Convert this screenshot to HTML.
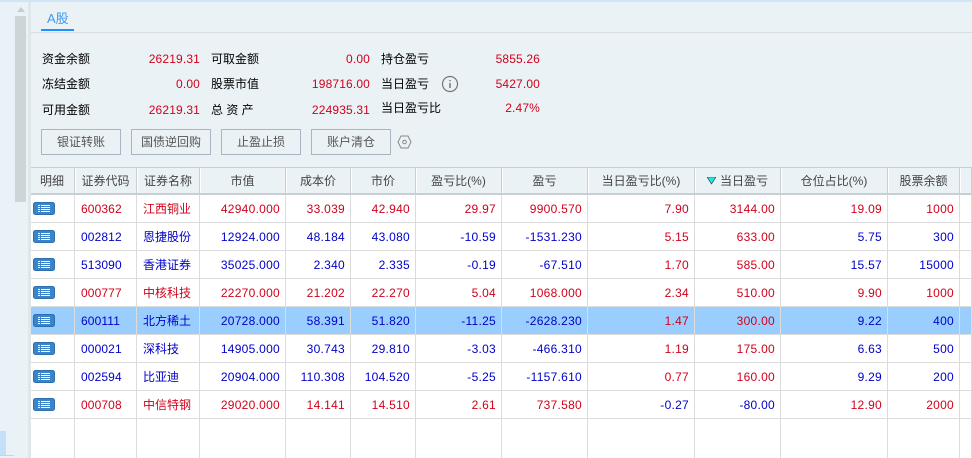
<!DOCTYPE html>
<html><head><meta charset="utf-8">
<style>
html,body{margin:0;padding:0;width:972px;height:458px;overflow:hidden}
body{position:relative;background:#fff;font:12px/16px "Liberation Sans","Noto Sans CJK SC",sans-serif;color:#222}
.a{position:absolute;white-space:nowrap}
.l{color:#000;font-size:12px}
.v{color:#d0021b;text-align:right;width:80px;letter-spacing:.15px}
.btn{position:absolute;top:129px;height:24px;width:78px;border:1px solid #a9b5c3;text-align:center;line-height:24px;color:#555;font-size:12px}
.clip{position:absolute;left:30px;top:167px;width:942px;height:291px;overflow:hidden}
table{position:absolute;left:0;top:0;border-collapse:separate;border-spacing:0;table-layout:fixed;width:942px}
th{height:25px;padding:0;background:#ebf2f6;font-weight:normal;color:#444;border-top:1px solid #c9ced2;border-bottom:2px solid #c9ced2;border-right:1px solid #c9ced2;text-align:center;font-size:12px;box-shadow:inset 1px 0 #fff}
td{height:27px;padding:0 5px 0 0;border-bottom:1px solid #dcdcdc;border-right:1px solid #dcdcdc;text-align:right;font-size:12px;letter-spacing:.27px;overflow:hidden;white-space:nowrap}
td.c{text-align:left;padding-left:6px;padding-right:0;letter-spacing:.12px}
td.n{letter-spacing:0}
tr.r td{color:#d0021b}
tr.b td{color:#0000c8}
tr.s td{background:#99ceff}
tr.f td{height:60px}
.ic{display:block;width:22px;height:13px;margin-left:3px}
td.i{padding:0;text-align:left}
</style></head><body>
<div class="a" style="left:0;top:0;width:972px;height:2px;background:#cfe6f8"></div>
<div class="a" style="left:0;top:2px;width:28px;height:456px;background:#e9f2f6"></div>
<div class="a" style="left:15px;top:16px;width:11px;height:186px;background:#cdd5d7"></div>
<svg class="a" style="left:17px;top:7px" width="8" height="5"><path d="M0 5L4 0L8 5Z" fill="#c4cdd0"/></svg>
<div class="a" style="left:0;top:431px;width:6px;height:24px;background:#c3e0f8"></div>
<div class="a" style="left:0;top:455px;width:14px;height:1px;background:#c5d5e2"></div>

<div class="a" style="left:31px;top:2px;width:941px;height:165px;background:#ebf2f6"></div>
<div class="a" style="left:31px;top:32px;width:941px;height:1px;background:#d8dde1"></div>
<div class="a" style="left:41px;top:29px;width:33px;height:2px;background:#1e90ff"></div>
<div class="a" style="left:47px;top:11px;color:#3a9bf0;font-size:13px">A股</div>

<div class="a l" style="left:42px;top:51px">资金余额</div>
<div class="a l" style="left:42px;top:76px">冻结金额</div>
<div class="a l" style="left:42px;top:102px">可用金额</div>
<div class="a v" style="left:120px;top:51px">26219.31</div>
<div class="a v" style="left:120px;top:76px">0.00</div>
<div class="a v" style="left:120px;top:102px">26219.31</div>

<div class="a l" style="left:211px;top:51px">可取金额</div>
<div class="a l" style="left:211px;top:76px">股票市值</div>
<div class="a l" style="left:211px;top:102px">总 资 产</div>
<div class="a v" style="left:290px;top:51px">0.00</div>
<div class="a v" style="left:290px;top:76px">198716.00</div>
<div class="a v" style="left:290px;top:102px">224935.31</div>

<div class="a l" style="left:381px;top:51px">持仓盈亏</div>
<div class="a l" style="left:381px;top:76px">当日盈亏</div>
<div class="a l" style="left:381px;top:100px">当日盈亏比</div>
<div class="a v" style="left:460px;top:51px">5855.26</div>
<div class="a v" style="left:460px;top:76px">5427.00</div>
<div class="a v" style="left:460px;top:100px">2.47%</div>
<svg class="a" style="left:441px;top:75px" width="18" height="18"><circle cx="9" cy="9" r="7.5" fill="none" stroke="#777" stroke-width="1.2"/><path d="M9 8V13M9 5V6.4" stroke="#666" stroke-width="1.3"/></svg>

<div class="btn" style="left:41px">银证转账</div>
<div class="btn" style="left:131px">国债逆回购</div>
<div class="btn" style="left:221px">止盈止损</div>
<div class="btn" style="left:311px">账户清仓</div>
<svg class="a" style="left:397px;top:135px" width="15" height="14"><path d="M4 1H11L14 7L11 13H4L1 7Z" fill="none" stroke="#888" stroke-width="1"/><circle cx="7.5" cy="7" r="1.8" fill="none" stroke="#888"/></svg>

<div class="clip">
<table>
<colgroup><col style="width:45px"><col style="width:62px"><col style="width:63px"><col style="width:86px"><col style="width:65px"><col style="width:65px"><col style="width:86px"><col style="width:86px"><col style="width:107px"><col style="width:86px"><col style="width:107px"><col style="width:72px"><col></colgroup>
<tr><th>明细</th><th>证券代码</th><th>证券名称</th><th>市值</th><th>成本价</th><th>市价</th><th>盈亏比(%)</th><th>盈亏</th><th>当日盈亏比(%)</th><th><svg width="9" height="8" style="margin-right:4px"><path d="M0 0H9L4.5 7Z" fill="#1de9e0" stroke="#223" stroke-width=".6"/></svg>当日盈亏</th><th>仓位占比(%)</th><th>股票余额</th><th></th></tr>
<tr class="r"><td class="i"><svg class="ic" viewBox="0 0 22 13"><rect x=".5" y=".5" width="21" height="12" rx="2" fill="#3a84c9" stroke="#2f6fae"/><path d="M5 3.5H7M8 3.5H17M5 5.5H7M8 5.5H17M5 7.5H7M8 7.5H17M5 9.5H7M8 9.5H17" stroke="#fff" stroke-width="1"/></svg></td><td class="c">600362</td><td class="c n">江西铜业</td><td>42940.000</td><td>33.039</td><td>42.940</td><td>29.97</td><td>9900.570</td><td>7.90</td><td>3144.00</td><td>19.09</td><td>1000</td><td></td></tr>
<tr class="b"><td class="i"><svg class="ic" viewBox="0 0 22 13"><rect x=".5" y=".5" width="21" height="12" rx="2" fill="#3a84c9" stroke="#2f6fae"/><path d="M5 3.5H7M8 3.5H17M5 5.5H7M8 5.5H17M5 7.5H7M8 7.5H17M5 9.5H7M8 9.5H17" stroke="#fff" stroke-width="1"/></svg></td><td class="c">002812</td><td class="c n">恩捷股份</td><td>12924.000</td><td>48.184</td><td>43.080</td><td>-10.59</td><td>-1531.230</td><td style="color:#d0021b">5.15</td><td style="color:#d0021b">633.00</td><td>5.75</td><td>300</td><td></td></tr>
<tr class="b"><td class="i"><svg class="ic" viewBox="0 0 22 13"><rect x=".5" y=".5" width="21" height="12" rx="2" fill="#3a84c9" stroke="#2f6fae"/><path d="M5 3.5H7M8 3.5H17M5 5.5H7M8 5.5H17M5 7.5H7M8 7.5H17M5 9.5H7M8 9.5H17" stroke="#fff" stroke-width="1"/></svg></td><td class="c">513090</td><td class="c n">香港证券</td><td>35025.000</td><td>2.340</td><td>2.335</td><td>-0.19</td><td>-67.510</td><td style="color:#d0021b">1.70</td><td style="color:#d0021b">585.00</td><td>15.57</td><td>15000</td><td></td></tr>
<tr class="r"><td class="i"><svg class="ic" viewBox="0 0 22 13"><rect x=".5" y=".5" width="21" height="12" rx="2" fill="#3a84c9" stroke="#2f6fae"/><path d="M5 3.5H7M8 3.5H17M5 5.5H7M8 5.5H17M5 7.5H7M8 7.5H17M5 9.5H7M8 9.5H17" stroke="#fff" stroke-width="1"/></svg></td><td class="c">000777</td><td class="c n">中核科技</td><td>22270.000</td><td>21.202</td><td>22.270</td><td>5.04</td><td>1068.000</td><td>2.34</td><td>510.00</td><td>9.90</td><td>1000</td><td></td></tr>
<tr class="b s"><td class="i"><svg class="ic" viewBox="0 0 22 13"><rect x=".5" y=".5" width="21" height="12" rx="2" fill="#3a84c9" stroke="#2f6fae"/><path d="M5 3.5H7M8 3.5H17M5 5.5H7M8 5.5H17M5 7.5H7M8 7.5H17M5 9.5H7M8 9.5H17" stroke="#fff" stroke-width="1"/></svg></td><td class="c">600111</td><td class="c n">北方稀土</td><td>20728.000</td><td>58.391</td><td>51.820</td><td>-11.25</td><td>-2628.230</td><td style="color:#d0021b">1.47</td><td style="color:#d0021b">300.00</td><td>9.22</td><td>400</td><td></td></tr>
<tr class="b"><td class="i"><svg class="ic" viewBox="0 0 22 13"><rect x=".5" y=".5" width="21" height="12" rx="2" fill="#3a84c9" stroke="#2f6fae"/><path d="M5 3.5H7M8 3.5H17M5 5.5H7M8 5.5H17M5 7.5H7M8 7.5H17M5 9.5H7M8 9.5H17" stroke="#fff" stroke-width="1"/></svg></td><td class="c">000021</td><td class="c n">深科技</td><td>14905.000</td><td>30.743</td><td>29.810</td><td>-3.03</td><td>-466.310</td><td style="color:#d0021b">1.19</td><td style="color:#d0021b">175.00</td><td>6.63</td><td>500</td><td></td></tr>
<tr class="b"><td class="i"><svg class="ic" viewBox="0 0 22 13"><rect x=".5" y=".5" width="21" height="12" rx="2" fill="#3a84c9" stroke="#2f6fae"/><path d="M5 3.5H7M8 3.5H17M5 5.5H7M8 5.5H17M5 7.5H7M8 7.5H17M5 9.5H7M8 9.5H17" stroke="#fff" stroke-width="1"/></svg></td><td class="c">002594</td><td class="c n">比亚迪</td><td>20904.000</td><td>110.308</td><td>104.520</td><td>-5.25</td><td>-1157.610</td><td style="color:#d0021b">0.77</td><td style="color:#d0021b">160.00</td><td>9.29</td><td>200</td><td></td></tr>
<tr class="r"><td class="i"><svg class="ic" viewBox="0 0 22 13"><rect x=".5" y=".5" width="21" height="12" rx="2" fill="#3a84c9" stroke="#2f6fae"/><path d="M5 3.5H7M8 3.5H17M5 5.5H7M8 5.5H17M5 7.5H7M8 7.5H17M5 9.5H7M8 9.5H17" stroke="#fff" stroke-width="1"/></svg></td><td class="c">000708</td><td class="c n">中信特钢</td><td>29020.000</td><td>14.141</td><td>14.510</td><td>2.61</td><td>737.580</td><td style="color:#0000c8">-0.27</td><td style="color:#0000c8">-80.00</td><td>12.90</td><td>2000</td><td></td></tr>
<tr class="f"><td style="border-bottom:0"></td><td style="border-bottom:0"></td><td style="border-bottom:0"></td><td style="border-bottom:0"></td><td style="border-bottom:0"></td><td style="border-bottom:0"></td><td style="border-bottom:0"></td><td style="border-bottom:0"></td><td style="border-bottom:0"></td><td style="border-bottom:0"></td><td style="border-bottom:0"></td><td style="border-bottom:0"></td><td style="border-bottom:0"></td></tr>
</table>
</div>
<div class="a" style="left:28px;top:2px;width:3px;height:456px;background:#dfe7eb"></div>
</body></html>
